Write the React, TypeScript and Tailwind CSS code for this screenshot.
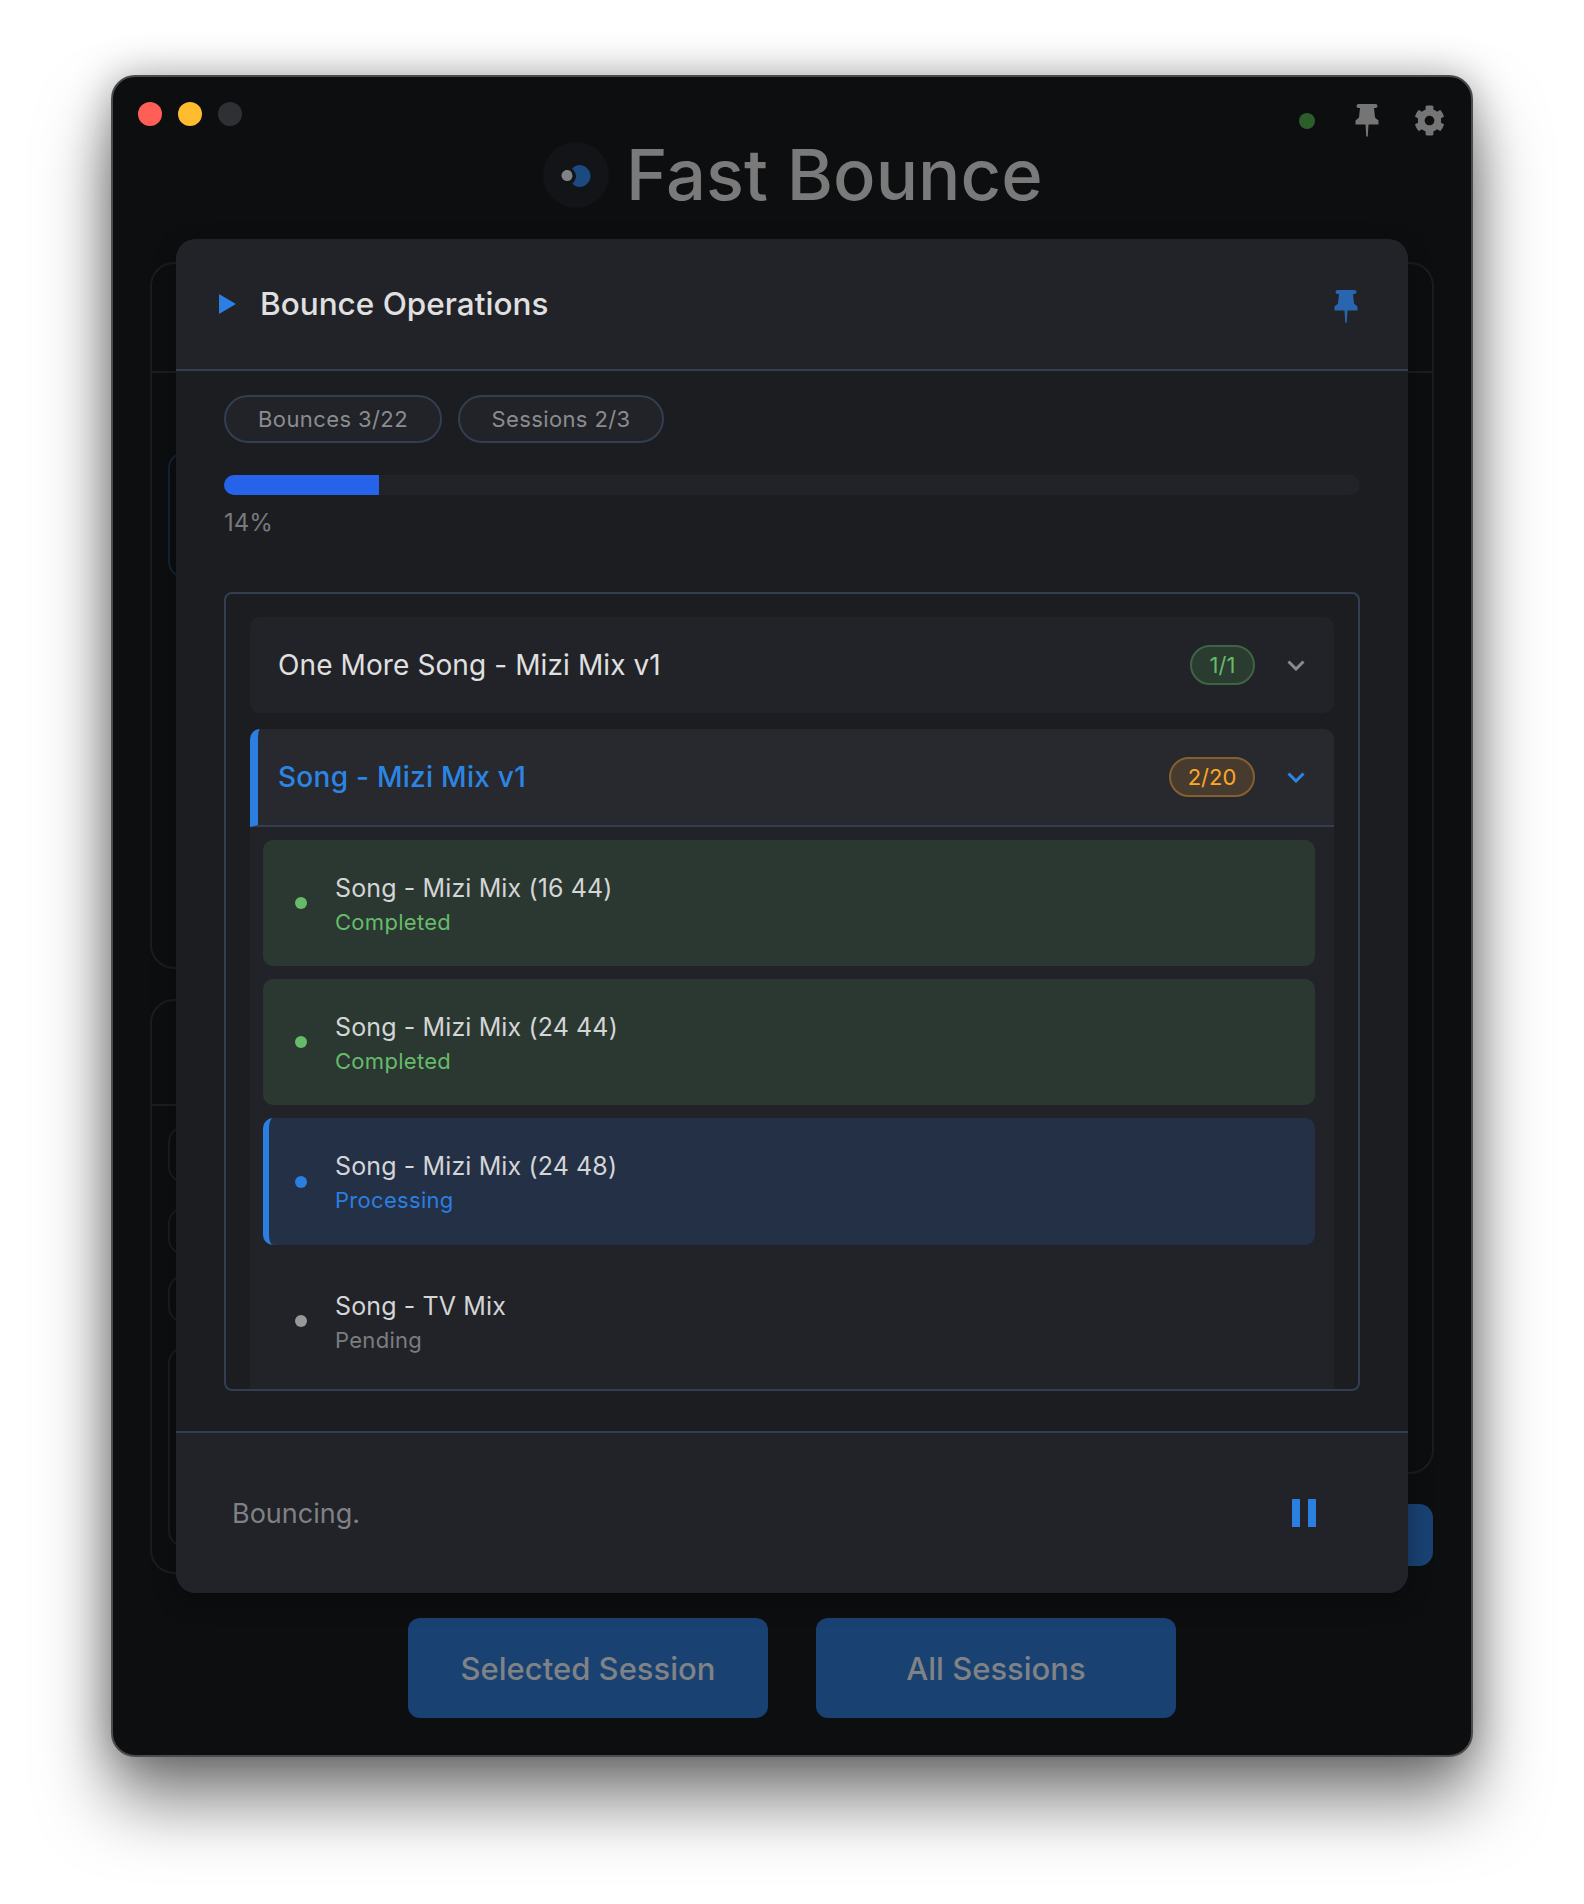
import { FaCog } from 'react-icons/fa';

const font = "font-['Inter','Liberation_Sans',sans-serif]";

const tracks = [
  { name: 'Song - Mizi Mix (16 44)', status: 'Completed', state: 'done' },
  { name: 'Song - Mizi Mix (24 44)', status: 'Completed', state: 'done' },
  { name: 'Song - Mizi Mix (24 48)', status: 'Processing', state: 'active' },
  { name: 'Song - TV Mix', status: 'Pending', state: 'pending' },
];

const Chevron = ({ className }: { className: string }) => (
  <svg width="18" height="11" viewBox="0 0 18 11" fill="none" className={className}>
    <path d="M1.5 1.5L9 9L16.5 1.5" stroke="currentColor" strokeWidth="3" />
  </svg>
);

const Pin = ({ className }: { className: string }) => (
  <svg width="24" height="33" viewBox="0 0 24 33" fill="currentColor" className={className}>
    <path d="M3.5 0H20.5a1.5 1.5 0 0 1 0 4H19L20 13.5L23.5 16.5V20.5H13.5L12.8 32a.8.8 0 0 1-1.6 0L10.5 20.5H.5V16.5L4 13.5L5 4H3.5a1.5 1.5 0 0 1 0-4Z" />
  </svg>
);

const Logo = () => (
  <svg width="66" height="66" viewBox="0 0 66 66" className="shrink-0">
    <circle cx="33" cy="33" r="33" fill="#131417" />
    <path d="M29 27C31 24 34 23 36.5 23C42.5 23 47.5 28 47.5 34C47.5 40 42.5 45 36.5 45C33.5 45 31 43.5 29.5 41.5C32 38.5 33 36.5 33 34C33 31.5 31.5 29 29 27Z" fill="#1b4a80" />
    <path d="M24 28C25.5 28 27 28.5 28 29.5C29 31 29.5 32.5 29.5 34C29.5 35.5 28.5 37 27.5 38C26.5 38.8 25.5 39 24 39C21 39 18.5 36.5 18.5 33.5C18.5 30.5 21 28 24 28Z" fill="#808285" />
  </svg>
);

const TrackRow = ({ name, status, state }: { name: string; status: string; state: string }) => (
  <div
    className={
      state === 'done'
        ? 'flex h-[126px] shrink-0 items-center rounded-[10px] bg-[#2b3831] pl-8'
        : state === 'active'
          ? 'flex h-[127px] shrink-0 items-center rounded-[10px] border-l-[6px] border-[#2a7fe0] bg-[#233045] pl-[26px]'
          : 'flex h-[126px] shrink-0 items-center rounded-[10px] pl-8'
    }
  >
    <span
      className={
        state === 'done'
          ? 'h-3 w-3 rounded-full bg-[#66bb6a]'
          : state === 'active'
            ? 'h-3 w-3 rounded-full bg-[#2a7fe0]'
            : 'h-3 w-3 rounded-full bg-[#97989a]'
      }
    />
    <div className="ml-[28px] mt-[3px]">
      <div className="text-[25px] leading-[34px] tracking-[0.12px] text-[#d4d5d6]">{name}</div>
      <div
        className={
          state === 'done'
            ? 'text-[22px] leading-[34px] tracking-[0.3px] text-[#66bb6a]'
            : state === 'active'
              ? 'text-[22px] leading-[34px] tracking-[0.3px] text-[#2a7fe0]'
              : 'text-[22px] leading-[34px] tracking-[0.3px] text-[#7b7d80]'
        }
      >
        {status}
      </div>
    </div>
  </div>
);

export default function App() {
  return (
    <div className={`${font} min-h-[1904px] bg-white pl-[111px] pt-[75px]`}>
      <div className="relative flex h-[1682px] w-[1362px] flex-col rounded-[24px] border-2 border-[#4a4b4d] bg-[#0d0e10] shadow-[0_44px_70px_rgba(0,0,0,0.5),0_0_40px_rgba(0,0,0,0.3)]">
        {/* title bar */}
        <div className="relative h-[185px] shrink-0">
          <div className="flex gap-4 pl-[25px] pt-[25px]">
            <span className="h-6 w-6 rounded-full bg-[#ff5f57]" />
            <span className="h-6 w-6 rounded-full bg-[#febc2e]" />
            <span className="h-6 w-6 rounded-full bg-[#2f3033]" />
          </div>
          <div className="absolute right-[26px] top-[27px] flex items-center">
            <span className="mr-[40px] h-4 w-4 rounded-full bg-[#2b5e2b]" />
            <Pin className="mr-[35px] text-[#757575]" />
            <FaCog className="text-[31px] text-[#757575]" />
          </div>
          <div className="absolute left-[430px] top-[62px] flex items-center gap-[17px]">
            <Logo />
            <h1 className="text-[70.5px] font-[450] leading-[72px] text-[#7a7a7a]">Fast Bounce</h1>
          </div>
        </div>

        {/* page behind the sheet */}
        <div className="flex flex-1 gap-8 px-[37px]">
          <div className="flex flex-1 flex-col gap-[30px]">
            <div className="h-[707px] rounded-[24px] border-2 border-[#1a1d22]">
              <div className="h-[109px] border-b-2 border-[#1a1d22]" />
              <div className="ml-4 mt-[79px] h-[126px] rounded-[16px] border-2 border-[#14243a]" />
            </div>
            <div className="h-[575px] rounded-[24px] border-2 border-[#1a1d22]">
              <div className="h-[105px] border-b-2 border-[#1a1d22]" />
              <div className="ml-4 mt-5 h-[57px] rounded-[16px] border-2 border-[#1c1d21]" />
              <div className="ml-4 mt-6 h-12 rounded-[16px] border-2 border-[#1c1d21]" />
              <div className="ml-4 mt-5 h-12 rounded-[16px] border-2 border-[#1c1d21]" />
              <div className="ml-4 mt-6 h-[200px] rounded-[16px] border-2 border-[#1c1d21]" />
            </div>
          </div>
          <div className="flex flex-1 flex-col">
            <div className="h-[1212px] rounded-[24px] border-2 border-[#1a1d22]">
              <div className="h-[109px] border-b-2 border-[#1a1d22]" />
            </div>
            <div className="ml-auto mr-px mt-[30px] h-[62px] w-[200px] rounded-[14px] bg-[#194273]" />
          </div>
        </div>

        {/* footer actions */}
        <div className="absolute left-[295px] top-[1541px] flex gap-12">
          <button className="h-[100px] w-[360px] rounded-[12px] bg-[#194273] pt-0.5 text-[31px] font-medium text-[#808285]">
            Selected Session
          </button>
          <button className="h-[100px] w-[360px] rounded-[12px] bg-[#194273] pt-0.5 text-[31px] font-medium text-[#808285]">
            All Sessions
          </button>
        </div>

        {/* bounce sheet */}
        <div className="absolute left-[63px] top-[162px] flex h-[1354px] w-[1232px] flex-col overflow-hidden rounded-[20px] bg-[#1c1d21] shadow-[0_8px_24px_rgba(0,0,0,0.3)]">
          <div className="flex h-[132px] shrink-0 items-center border-b-2 border-[#333e50] bg-[#212328] pl-[43px] pr-[50px]">
            <svg width="17" height="20" viewBox="0 0 17 20" className="shrink-0">
              <path d="M0 0L17 10L0 20Z" fill="#2a7fe0" />
            </svg>
            <span className="ml-6 flex-1 text-[31.5px] font-medium text-[#e0e0e0]">Bounce Operations</span>
            <Pin className="mt-1 text-[#2a66b0]" />
          </div>

          <div className="flex flex-1 flex-col px-12">
            <div className="mt-6 flex gap-4">
              <span className="flex h-12 w-[218px] items-center justify-center rounded-full border-2 border-[#333e50] bg-[#212328] text-[22px] tracking-[0.4px] text-[#8a8c90]">
                Bounces 3/22
              </span>
              <span className="flex h-12 w-[206px] items-center justify-center rounded-full border-2 border-[#333e50] bg-[#212328] text-[22px] tracking-[0.4px] text-[#8a8c90]">
                Sessions 2/3
              </span>
            </div>

            <div className="mt-8 h-5 overflow-hidden rounded-full bg-[#212328]">
              <div className="h-full w-[155px] bg-[#2563eb]" />
            </div>
            <div className="mt-[13px] text-[24px] leading-[30px] text-[#77797c]">14%</div>

            <div className="mt-[54px] flex h-[799px] flex-col gap-4 overflow-hidden rounded-[8px] border-2 border-[#333e50] px-6 pt-[23px]">
              <div className="flex h-24 shrink-0 items-center rounded-[10px] bg-[#212328] pl-7 pr-[29px]">
                <span className="flex-1 text-[28px] tracking-[0.1px] text-[#e0e0e0]">One More Song - Mizi Mix v1</span>
                <span className="flex h-10 w-[65px] items-center justify-center rounded-full border-2 border-[#3f6444] bg-[#2a3b30] text-[22px] text-[#66bb6a]">
                  1/1
                </span>
                <Chevron className="ml-8 text-[#8a8a8a]" />
              </div>

              <div className="flex shrink-0 flex-col">
                <div className="flex h-[98px] items-center rounded-t-[10px] border-b-2 border-l-8 border-b-[#333e50] border-l-[#2a7fe0] bg-[#28292e] pl-5 pr-[29px]">
                  <span className="flex-1 text-[28px] font-medium tracking-[0.27px] text-[#2b85e4]">Song - Mizi Mix v1</span>
                  <span className="flex h-10 w-[86px] items-center justify-center rounded-full border-2 border-[#85602e] bg-[#473b30] text-[22px] text-[#ffa726]">
                    2/20
                  </span>
                  <Chevron className="ml-8 text-[#2a85e4]" />
                </div>
                <div className="flex flex-col gap-[13px] bg-[#212328] pb-[13px] pl-[13px] pr-[19px] pt-[13px]">
                  {tracks.map((t) => (
                    <TrackRow key={t.name} name={t.name} status={t.status} state={t.state} />
                  ))}
                </div>
              </div>
            </div>
          </div>

          <div className="flex h-[162px] shrink-0 items-center border-t-2 border-[#333e50] bg-[#212328] pl-14 pr-[92px]">
            <span className="mt-0.5 flex-1 text-[27px] text-[#7f8185]">Bouncing.</span>
            <span className="flex gap-2">
              <span className="h-7 w-2 bg-[#2a7fe0]" />
              <span className="h-7 w-2 bg-[#2a7fe0]" />
            </span>
          </div>
        </div>
      </div>
    </div>
  );
}
